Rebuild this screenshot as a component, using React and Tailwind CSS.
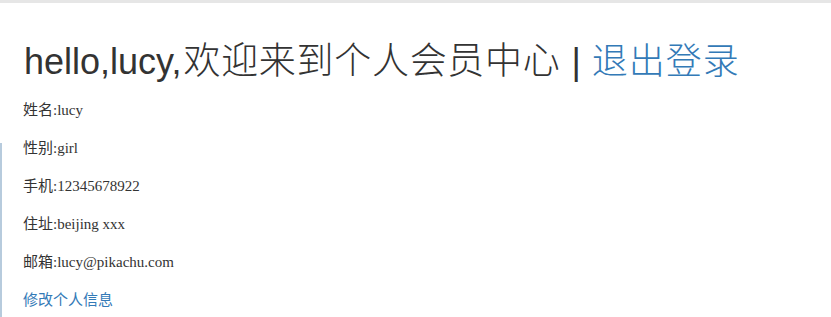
import React from 'react';

const user = {
  name: 'lucy',
  sex: 'girl',
  phone: '12345678922',
  address: 'beijing xxx',
  email: 'lucy@pikachu.com',
};

const InfoRow = ({ label, value }) => (
  <p className="h-[20px] leading-[20px] mb-[18px]">
    {label}:{value}
  </p>
);

export default function App() {
  return (
    <div className="w-[831px] h-[317px] bg-white overflow-hidden border-t-[3px] border-[#e6e6e6] text-[#333]">
      <div className="flex h-full">
        <div className="w-[2px] flex flex-col">
          <div className="mt-[140px] flex-1 bg-[#b7cbdd]" />
        </div>
        <div className="pl-[22px]">
          <h1
            className="mt-[39px] mb-[18px] text-[36px] leading-[40px] font-light whitespace-nowrap"
            style={{ fontFamily: '"Liberation Sans", "Noto Sans CJK SC", sans-serif' }}
          >
            hello,{user.name},<span className="text-[37px] ml-[2px] tracking-[0.7px]">欢迎来到个人会员中心</span>
            <span className="mx-[11px]">|</span>
            <a className="text-[#337ab7] text-[36px] tracking-[1px]" href="#">退出登录</a>
          </h1>
          <div
            className="text-[15px] -ml-[1px]"
            style={{ fontFamily: '"Liberation Serif", "Noto Sans CJK SC", serif' }}
          >
            <InfoRow label="姓名" value={user.name} />
            <InfoRow label="性别" value={user.sex} />
            <InfoRow label="手机" value={user.phone} />
            <InfoRow label="住址" value={user.address} />
            <InfoRow label="邮箱" value={user.email} />
            <a className="block h-[20px] leading-[20px] text-[#337ab7]" href="#">修改个人信息</a>
          </div>
        </div>
      </div>
    </div>
  );
}
